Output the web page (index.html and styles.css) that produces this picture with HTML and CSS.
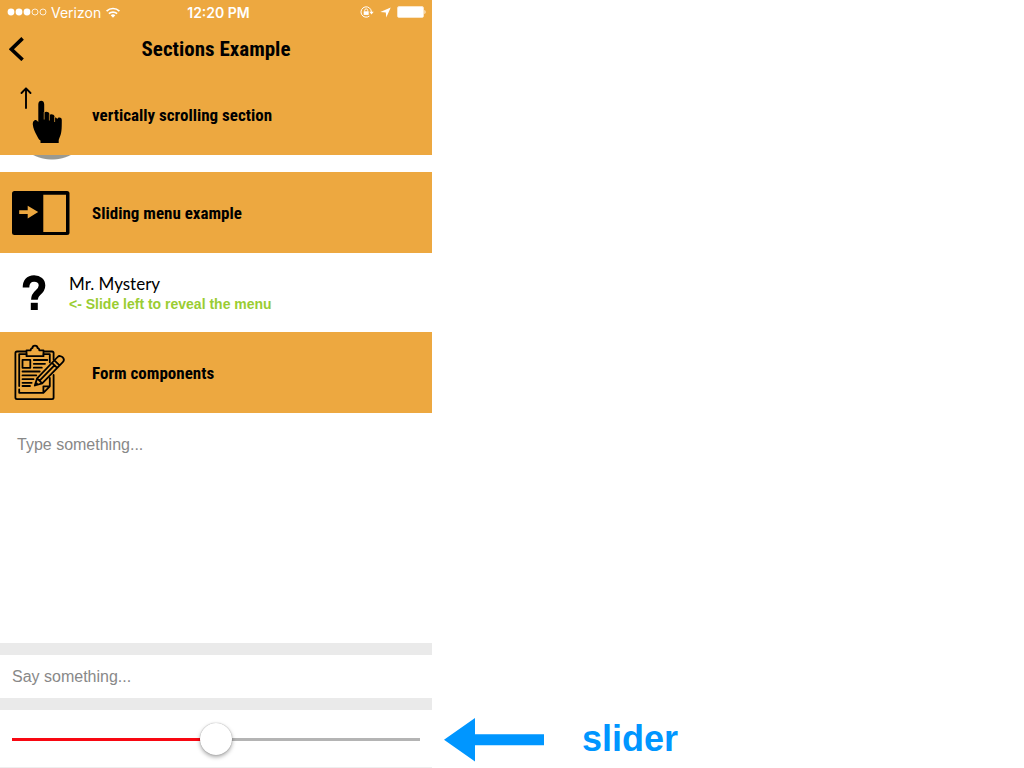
FILE: index.html
```html
<!DOCTYPE html>
<html lang="en">
<head>
<meta charset="utf-8">
<meta name="viewport" content="width=device-width, initial-scale=1">
<title>Sections Example</title>
<link rel="stylesheet" href="styles.css">
</head>
<body>
<div class="layout">
  <main class="phone">
    <header>
      <div class="status">
        <div class="carrier">
          <svg width="40" height="10" viewBox="0 0 40 10" aria-hidden="true">
            <g fill="#fff"><circle cx="4" cy="5" r="3.4"/><circle cx="12" cy="5" r="3.4"/><circle cx="20" cy="5" r="3.4"/></g>
            <g fill="none" stroke="#fff" stroke-width=".8"><circle cx="28" cy="5" r="3"/><circle cx="36" cy="5" r="3"/></g>
          </svg>
          <span>Verizon</span>
          <svg class="wifi" width="14" height="11" viewBox="0 0 14 11" aria-hidden="true">
            <g fill="none" stroke="#fff" stroke-width="1.7"><path d="M.6 4.1a9.2 9.2 0 0 1 12.8 0"/><path d="M2.9 6.7a5.9 5.9 0 0 1 8.2 0"/></g>
            <path fill="#fff" d="M4.7 8.3a3.3 3.3 0 0 1 4.6 0L7 10.7z"/>
          </svg>
        </div>
        <time>12:20 PM</time>
        <div class="indicators">
          <svg width="14" height="12" viewBox="0 0 14 12" aria-hidden="true">
            <path d="M11.4 6A5.2 5.2 0 1 0 9.4 10.1" fill="none" stroke="#fff" stroke-width="1"/>
            <path d="M9.3 5.8h4.4l-2.2 2.6z" fill="#fff"/>
            <rect x="3.7" y="5.3" width="5" height="3.6" fill="#fff"/>
            <path d="M4.7 5.5V4.4a1.5 1.5 0 0 1 3 0v1.1" fill="none" stroke="#fff" stroke-width=".9"/>
          </svg>
          <svg width="11" height="11" viewBox="0 0 11 11" aria-hidden="true"><path fill="#fff" d="M10.7.4 6.3 10.6 5.8 5.5.3 5.1z"/></svg>
          <svg width="29" height="12" viewBox="0 0 29 12" aria-hidden="true">
            <rect x=".5" y=".5" width="26" height="11" rx="1.5" fill="none" stroke="#fff" stroke-opacity=".7"/>
            <rect x="1" y="1" width="25" height="10" rx=".5" fill="#fff"/>
            <path d="M27.5 4c1.3.4 1.3 3.6 0 4z" fill="#fff"/>
          </svg>
        </div>
      </div>
      <nav class="navbar">
        <button class="back" type="button" aria-label="Back">
          <svg width="16" height="24" viewBox="0 0 16 24" aria-hidden="true"><path d="M13.6 1.4 2.4 12.2l11.2 10.6" fill="none" stroke="#000" stroke-width="3.6"/></svg>
        </button>
        <h1>Sections Example</h1>
      </nav>
    </header>

    <section>
      <div class="section-head">
        <svg class="section-icon" viewBox="0 0 58 58" aria-hidden="true">
          <path d="M14 22V2.5M9.5 7 14 2.4 18.5 7" fill="none" stroke="#000" stroke-width="1.9" stroke-linecap="round" stroke-linejoin="round"/>
          <path d="M28.5 57v-2.4c-1.7-1.1-2.6-2.8-3.7-5.1-2-4-3.7-7.1-4-11.1-.1-2.1.5-3.4 1.8-4.2 1.2-.7 2.5 0 3.7 1.7V18.3c0-4.6 5.9-4.6 5.9 0v8.2c1.6-1.4 4.9-.8 5.2 1.6v.8c1.8-1.2 4.7-.5 5.2 1.8v.9c1-.5 2.1.3 2.8 1.4.6-2.1 4.4-1.8 4.4.9 0 8.8 0 13.4-2.6 18.5-.4.8-.5 1.6-.5 2.3V57z"/>
          <path d="M32.2 26v7.5M37.4 28.5v6M42.6 31v5" stroke="#eda840" stroke-width=".7"/>
        </svg>
        <h2>vertically scrolling section</h2>
      </div>
      <div class="scroller"><div class="avatar"></div></div>
    </section>

    <section>
      <div class="section-head">
        <svg class="section-icon" viewBox="0 0 58 58" aria-hidden="true">
          <rect y="7" width="57.5" height="44" rx="2.5"/>
          <path fill="#eda840" d="M31.3 10.7H54v37.4H31.3zM7.2 26.2h8.5v-4.5l10.5 6.4-10.5 6.4V30H7.2z"/>
        </svg>
        <h2>Sliding menu example</h2>
      </div>
      <div class="person">
        <svg width="24" height="36" viewBox="0 0 24 36" aria-hidden="true">
          <path d="M4 12.5C4 7 6.7 3.5 12.1 3.5c4.8 0 7.9 2.7 7.9 7 0 3.4-1.5 5-4.1 7.2-2.6 2.2-3.5 3.4-3.5 7" fill="none" stroke="#000" stroke-width="6.6"/>
          <path d="M8.8 27.8h7V35h-7z"/>
        </svg>
        <div><p class="name">Mr. Mystery</p><p class="hint">&lt;- Slide left to reveal the menu</p></div>
      </div>
    </section>

    <section class="form">
      <div class="section-head">
        <svg class="section-icon" viewBox="1 -1 58 58" aria-hidden="true">
          <g fill="none" stroke="#000" stroke-width="1.8" stroke-linejoin="round" stroke-linecap="round">
            <path d="M14.5 6.5H6q-1.6 0-1.6 1.6v44.4q0 1.6 1.6 1.6h35q1.6 0 1.6-1.6V30M33.5 6.5H41q1.6 0 1.6 1.6v6.7"/>
            <path d="M15.5 11.2V5.3h4.2c0-1.5.5-2.1 1.7-2.2.2-3.3 5-3.3 5.2 0 1.2.1 1.7.7 1.7 2.2h4.2v5.9z"/>
            <path d="M15.5 9.2H8.2V41M32.5 9.2h6.3v8.2M38.8 33v8.3l-6.4 6.5H8.2v-3.3M32.4 47.5v-6.2h6.2"/>
            <path d="M11.5 14.8h7.8v8H11.5zM22.8 15h13.5M22.8 18.8H34M22.8 22.7h8M11.5 26.5h17.2M11.5 30.4h13.8M11.5 34.2h11M11.5 37.8h9.2M11.5 41h7.5"/>
            <path fill="#eda840" d="m23.8 40.5 2.3-7.1L46.6 12c3-3.2 8.3 2.1 5.2 5.2L31.2 38.3zM26.1 33.4l5.1 4.9M43.4 15.3l5.2 5.1M41 17.8l5.2 5.1M28.6 35.6l15-15.4M23.8 40.5l2.2-2"/>
          </g>
        </svg>
        <h2>Form components</h2>
      </div>
      <textarea class="message" placeholder="Type something..." aria-label="Message"></textarea>
      <input class="say" type="text" placeholder="Say something..." aria-label="Say something">
      <div class="slider-row"><input class="slider" id="amount" type="range" min="0" max="100" value="50"></div>
    </section>
  </main>

  <aside class="notes">
    <svg width="100" height="44" viewBox="0 0 100 44" aria-hidden="true"><path fill="#0096ff" d="M0 21.7 31 0v16.3h69v11H31v16.2z"/></svg>
    <label for="amount">slider</label>
  </aside>
</div>
</body>
</html>
```
FILE: styles.css
```css
* {
  box-sizing: border-box;
}

body {
  margin: 0;
  background: #fff;
  color: #000;
  font-family: "Liberation Sans", Arial, sans-serif;
}

h1, h2, p {
  margin: 0;
}

svg {
  display: block;
  flex: none;
}

.layout {
  display: grid;
  grid-template-columns: 27fr 37fr;
  min-height: 100vh;
}

.phone {
  display: flex;
  flex-direction: column;
  min-width: 0;
}

header {
  background: #eda840;
}

.status {
  display: grid;
  grid-template-columns: 1fr auto 1fr;
  align-items: center;
  height: 24px;
  padding: 0 6px 0 7px;
  color: #fff;
  font-family: Inter, sans-serif;
  font-size: 14px;
}

.status time {
  font-weight: 600;
  padding-left: 4px;
}

.carrier, .indicators {
  display: flex;
  align-items: center;
  gap: 4px;
}

.wifi {
  margin-left: 1px;
}

.indicators {
  justify-content: flex-end;
  gap: 6px;
}

.navbar {
  display: grid;
  grid-template-columns: 32px 1fr 32px;
  align-items: center;
  height: 50px;
}

.back {
  padding: 0 0 0 9px;
  border: 0;
  background: none;
}

h1, h2 {
  font-family: "Roboto Condensed", "Liberation Sans", sans-serif;
  font-weight: bold;
}

h1 {
  font-size: 21px;
  line-height: 24px;
  text-align: center;
}

h2 {
  padding-top: 1px;
  font-size: 17px;
  line-height: 24px;
}

.section-head {
  display: flex;
  align-items: center;
  gap: 22px;
  height: 81px;
  padding: 0 12px;
  background: #eda840;
}

.section-icon {
  width: 58px;
  height: 58px;
}

.scroller {
  display: flex;
  flex-direction: column;
  height: 17px;
  padding: 0 10px 12px;
}

.avatar {
  flex: 1;
  width: 84px;
  background: radial-gradient(circle at 42px -37px, #999a93 41px, transparent 42px);
}

.person {
  display: flex;
  align-items: center;
  gap: 23px;
  height: 79px;
  padding: 1px 22px 0;
}

.name {
  font-family: Lato, sans-serif;
  font-size: 17px;
  line-height: 22px;
}

.hint {
  color: #9acd32;
  font-size: 14px;
  font-weight: bold;
  line-height: 18px;
}

.form {
  display: flex;
  flex: 1;
  flex-direction: column;
}

.message, .say {
  width: 100%;
  border: 0;
  border-bottom: 12px solid #eaeaea;
  border-radius: 0;
  background: #fff;
  color: #222;
  font-family: "Liberation Sans", Arial, sans-serif;
  font-size: 16px;
  line-height: 20px;
}

.message {
  flex: 1;
  min-height: 120px;
  padding: 22px 17px;
  resize: none;
}

.say {
  height: 55px;
  padding: 0 12px;
}

.message::placeholder, .say::placeholder {
  color: #888;
  opacity: 1;
}

.slider-row {
  display: flex;
  align-items: center;
  height: 58px;
  padding: 1px 12px 0;
  border-bottom: 1px solid #eee;
}

.slider {
  appearance: none;
  width: 100%;
  height: 32px;
  margin: 0;
  background: linear-gradient(to right, #f80812 50%, #b4b4b4 50%) center / 100% 3px no-repeat;
}

.slider::-webkit-slider-thumb {
  appearance: none;
  width: 32px;
  height: 32px;
  border-radius: 50%;
  background: #fff;
  box-shadow: 0 0 1px rgba(0, 0, 0, .4), 0 2px 4px rgba(0, 0, 0, .35);
}

.notes {
  display: flex;
  align-items: center;
  align-self: end;
  gap: 38px;
  height: 58px;
  padding: 1px 0 0 12px;
}

.notes label {
  padding-bottom: 2px;
  color: #0096ff;
  font-size: 36px;
  font-weight: bold;
  line-height: 40px;
}
```
